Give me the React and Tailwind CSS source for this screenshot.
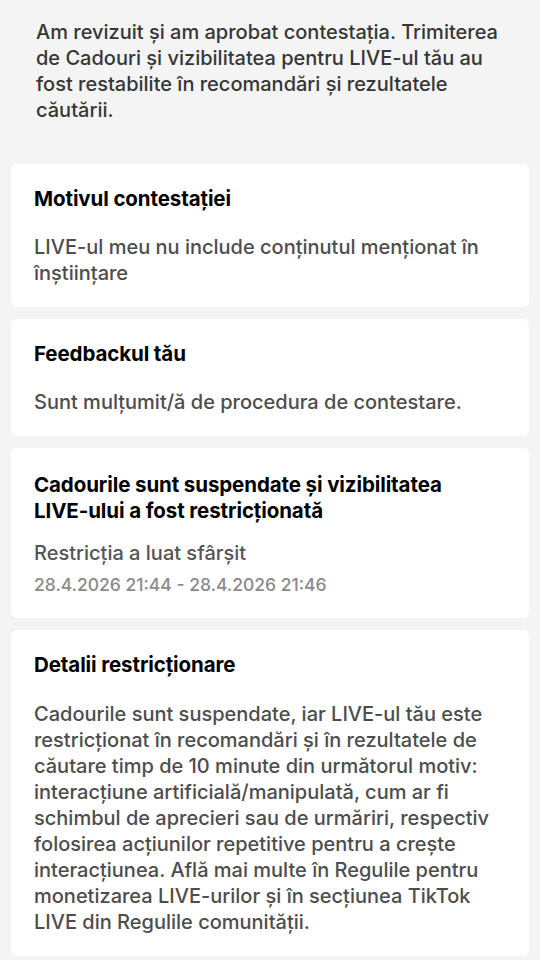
import React from 'react';

const font = { fontFamily: 'Inter, "Noto Sans", sans-serif' };

function Card({ title, children, className = 'pt-[22px] pb-[21px]' }) {
  return (
    <div className={`bg-white rounded-md px-[23px] ${className}`}>
      <div className="text-[20.5px] leading-[26px] font-bold text-black tracking-[-0.1px]">{title}</div>
      {children}
    </div>
  );
}

export default function App() {
  const cards = [
    {
      title: 'Motivul contestației',
      body: 'LIVE-ul meu nu include conținutul menționat în înștiințare'
    },
    {
      title: 'Feedbackul tău',
      body: 'Sunt mulțumit/ă de procedura de contestare.'
    }
  ];

  return (
    <div className="min-h-screen w-[540px] bg-[#f4f4f4] overflow-hidden" style={font}>
      <p className="pl-[36px] pr-[24px] pt-[19px] text-[20px] leading-[26px] font-medium text-[#363636]">
        Am revizuit și am aprobat contestația. Trimiterea de Cadouri și vizibilitatea pentru LIVE-ul tău au fost restabilite în recomandări și rezultatele căutării.
      </p>

      <div className="mt-[41px] px-[11px] flex flex-col gap-[12px]">
        {cards.map((c) => (
          <Card key={c.title} title={c.title}>
            <p className="mt-[22px] text-[20px] leading-[26px] font-medium text-[#4d4d4d]">{c.body}</p>
          </Card>
        ))}

        <Card title={<>Cadourile sunt suspendate și vizibilitatea<br />LIVE-ului a fost restricționată</>} className="pt-[24px] pb-[22px]">
          <p className="mt-[16px] text-[20px] leading-[26px] font-medium text-[#555555]">Restricția a luat sfârșit</p>
          <p className="mt-[8px] text-[17.5px] leading-[22px] font-medium text-[#8a8a8a]">28.4.2026 21:44 - 28.4.2026 21:46</p>
        </Card>

        <Card title="Detalii restricționare" className="pt-[22px] pb-[21px]">
          <p className="mt-[23px] text-[20px] leading-[26px] font-medium text-[#4d4d4d]">
            Cadourile sunt suspendate, iar LIVE-ul tău este restricționat în recomandări și în rezultatele de căutare timp de 10 minute din următorul motiv: interacțiune artificială/manipulată, cum ar fi schimbul de aprecieri sau de urmăriri, respectiv folosirea acțiunilor repetitive pentru a crește interacțiunea. Află mai multe în Regulile pentru monetizarea LIVE-urilor și în secțiunea TikTok LIVE din Regulile comunității.
          </p>
        </Card>
      </div>
    </div>
  );
}
